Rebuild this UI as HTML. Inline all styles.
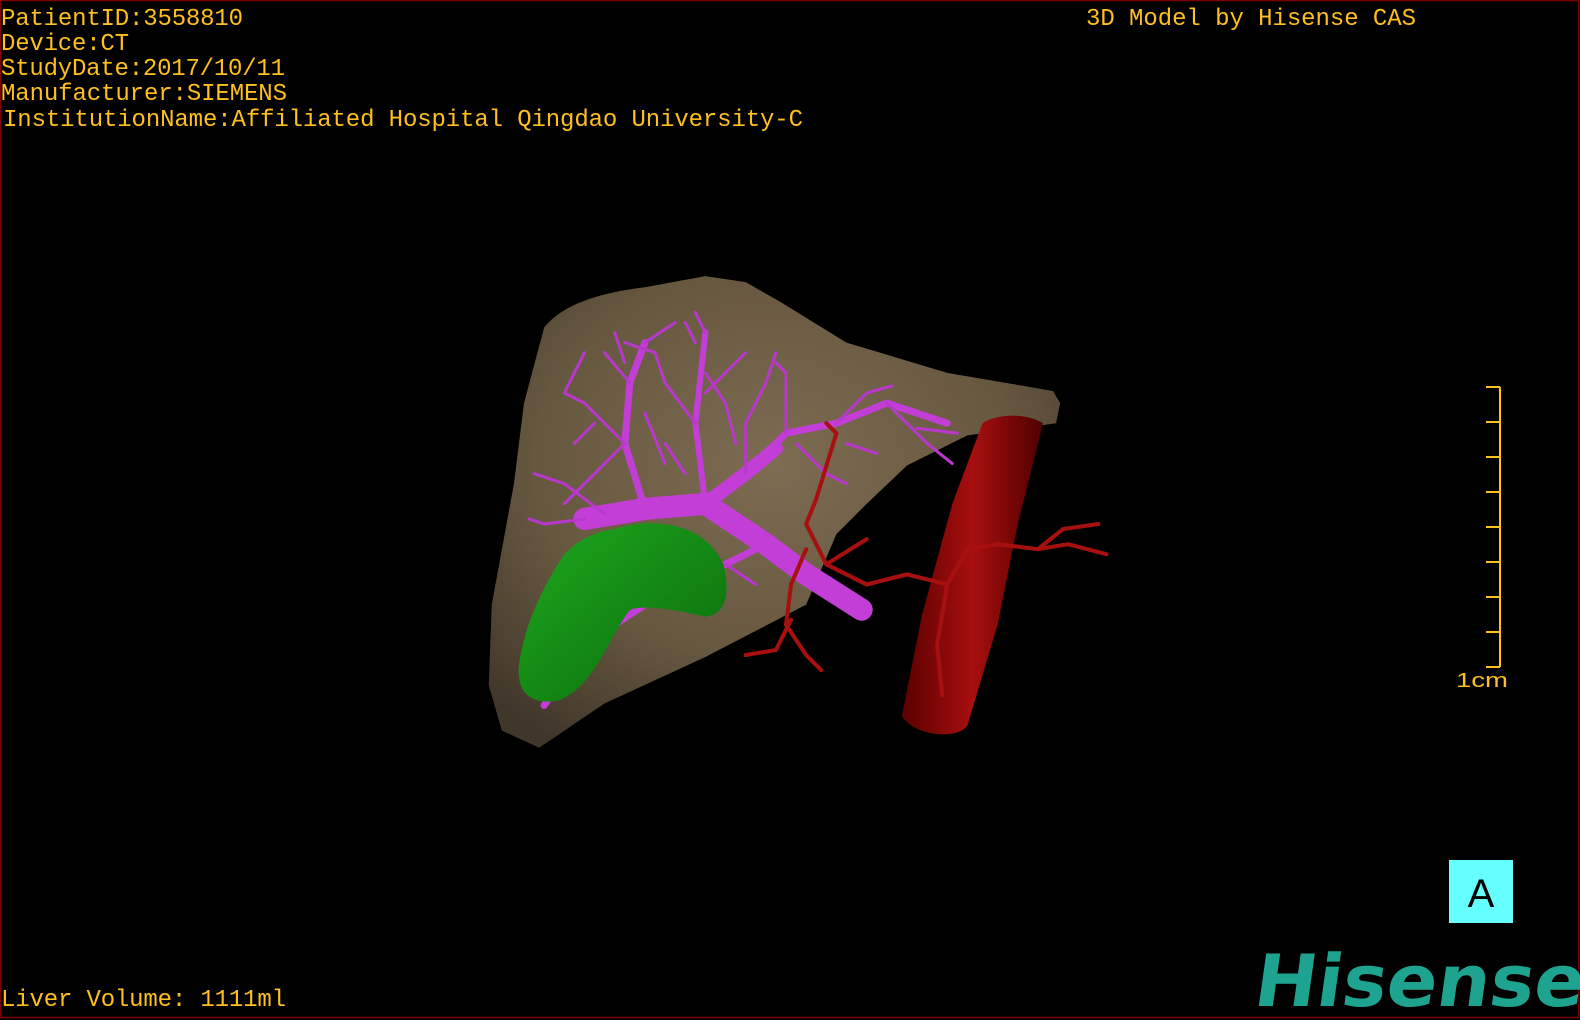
<!DOCTYPE html>
<html><head><meta charset="utf-8"><style>
html,body{margin:0;padding:0;background:#000;width:1580px;height:1020px;overflow:hidden}
svg{display:block}
</style></head><body>
<svg width="1580" height="1020" viewBox="0 0 1580 1020" xmlns="http://www.w3.org/2000/svg">
<defs>
<radialGradient id="lv" cx="0.5" cy="0.4" r="0.7">
<stop offset="0" stop-color="#7d6c52"/><stop offset="0.6" stop-color="#66573f"/><stop offset="1" stop-color="#40362a"/>
</radialGradient>
<linearGradient id="ivc" x1="0" y1="0" x2="1" y2="0">
<stop offset="0" stop-color="#5a0000"/><stop offset="0.5" stop-color="#a80f0f"/><stop offset="1" stop-color="#500000"/>
</linearGradient>
<linearGradient id="gb" x1="0" y1="0" x2="1" y2="1">
<stop offset="0" stop-color="#1ea81e"/><stop offset="1" stop-color="#0a6a0a"/>
</linearGradient>
</defs>
<rect x="0.5" y="0.5" width="1578" height="1017" fill="#000" stroke="#7a0000" stroke-width="1.5"/>
<g transform="scale(1.0077)">
<path d="M540,325 C560,300 600,290 640,285 L700,274 L740,280 L775,300 L840,340 L940,370 L1045,388 L1052,400 L1048,420 L960,432 L900,462 L860,500 L830,530 L800,600 L700,652 L600,698 L535,742 L498,725 L485,680 L488,600 L510,480 L520,400 Z" fill="url(#lv)"/>
<path d="M975,420 C990,410 1020,410 1035,420 L1010,520 L990,620 L960,720 C950,735 905,730 895,710 L915,610 L945,500 Z" fill="url(#ivc)"/>
<g stroke="#c23ed6" fill="none" stroke-linecap="round">
<path d="M855,605 L800,570 L760,540 L700,500 L640,505 L580,515" stroke-width="22"/>
<path d="M700,500 L740,470 L770,445" stroke-width="14"/>
<path d="M740,470 L780,430 L830,420 L880,400 L940,420" stroke-width="7"/>
<path d="M640,505 L620,440 L625,380 L640,340" stroke-width="7"/>
<path d="M700,500 L690,420 L700,330" stroke-width="6"/>
<path d="M760,540 L720,560 L640,600 L580,640 L540,700" stroke-width="7"/>
</g>
<g stroke="#b938cc" fill="none" stroke-width="3" stroke-linecap="round">
<path d="M620,440 L580,400 L560,390"/><path d="M625,380 L600,350"/><path d="M640,340 L670,320"/>
<path d="M700,330 L690,310"/><path d="M690,420 L660,380 L650,350"/><path d="M700,390 L740,350"/>
<path d="M740,470 L740,420 L760,380"/><path d="M780,430 L780,370 L770,360"/><path d="M830,420 L860,390 L885,383"/>
<path d="M880,400 L920,440 L945,460"/><path d="M600,510 L560,480 L530,470"/><path d="M580,515 L540,520 L525,515"/>
<path d="M620,440 L590,470 L560,500"/><path d="M660,460 L640,410"/><path d="M730,440 L720,400 L700,370"/>
<path d="M790,440 L820,470 L840,480"/><path d="M610,620 L560,620"/><path d="M580,640 L540,670"/>
<path d="M720,560 L750,580"/><path d="M560,390 L580,350"/><path d="M650,350 L620,340"/>
<path d="M680,320 L690,340"/><path d="M760,380 L770,350"/><path d="M620,360 L610,330"/><path d="M590,420 L570,440"/>
<path d="M910,425 L950,430"/><path d="M840,440 L870,450"/><path d="M660,440 L680,470"/>
</g>
<path d="M610,525 C650,512 700,520 718,560 C725,590 720,610 700,612 C670,605 640,600 625,605 C600,640 590,680 555,695 C530,700 512,690 515,660 C520,620 540,580 560,550 C575,535 590,528 610,525 Z" fill="url(#gb)"/>
<g stroke="#a81010" fill="none" stroke-width="4" stroke-linecap="round">
<path d="M940,580 L900,570 L860,580 L820,560 L800,520 L810,495"/>
<path d="M800,545 L785,580 L780,620 L800,650 L815,665"/>
<path d="M785,615 L770,645 L740,650"/>
<path d="M940,580 L960,545 L990,540 L1030,545 L1055,525 L1090,520"/>
<path d="M1030,545 L1060,540 L1098,550"/>
<path d="M820,560 L860,535"/><path d="M810,495 L830,430 L820,420"/>
<path d="M940,580 L930,640 L935,690"/>
</g>
</g>
<g font-family="'Liberation Mono',monospace" font-size="24" fill="#ffbf1f">
<text x="1" y="25" textLength="242">PatientID:3558810</text>
<text x="1" y="50" textLength="128">Device:CT</text>
<text x="1" y="75" textLength="284">StudyDate:2017/10/11</text>
<text x="1" y="100" textLength="286">Manufacturer:SIEMENS</text>
<text x="3" y="126" textLength="800">InstitutionName:Affiliated Hospital Qingdao University-C</text>
<text x="1086" y="25" textLength="330">3D Model by Hisense CAS</text>
<text x="1" y="1006" textLength="285">Liver Volume: 1111ml</text>
<text x="1456" y="687" textLength="52" lengthAdjust="spacingAndGlyphs" font-family="'Liberation Sans',sans-serif" font-size="20">1cm</text>
</g>
<g stroke="#ffbf1f" stroke-width="2" fill="none">
<path d="M1500,387 L1500,667"/>
<path d="M1486,387H1500M1486,422H1500M1486,457H1500M1486,492H1500M1486,527H1500M1486,562H1500M1486,597H1500M1486,632H1500M1486,667H1500"/>
</g>
<rect x="1449" y="860" width="64" height="63" fill="#66ffff"/>
<text x="1481" y="907" text-anchor="middle" font-family="'Liberation Sans',sans-serif" font-size="40" fill="#000">A</text>
<g transform="translate(1252,1006) skewX(-8)">
<text x="0" y="0" textLength="330" lengthAdjust="spacingAndGlyphs" font-family="'DejaVu Sans',sans-serif" font-weight="bold" font-size="72" fill="#1fa391">Hisense</text>
</g>
</svg>
</body></html>
